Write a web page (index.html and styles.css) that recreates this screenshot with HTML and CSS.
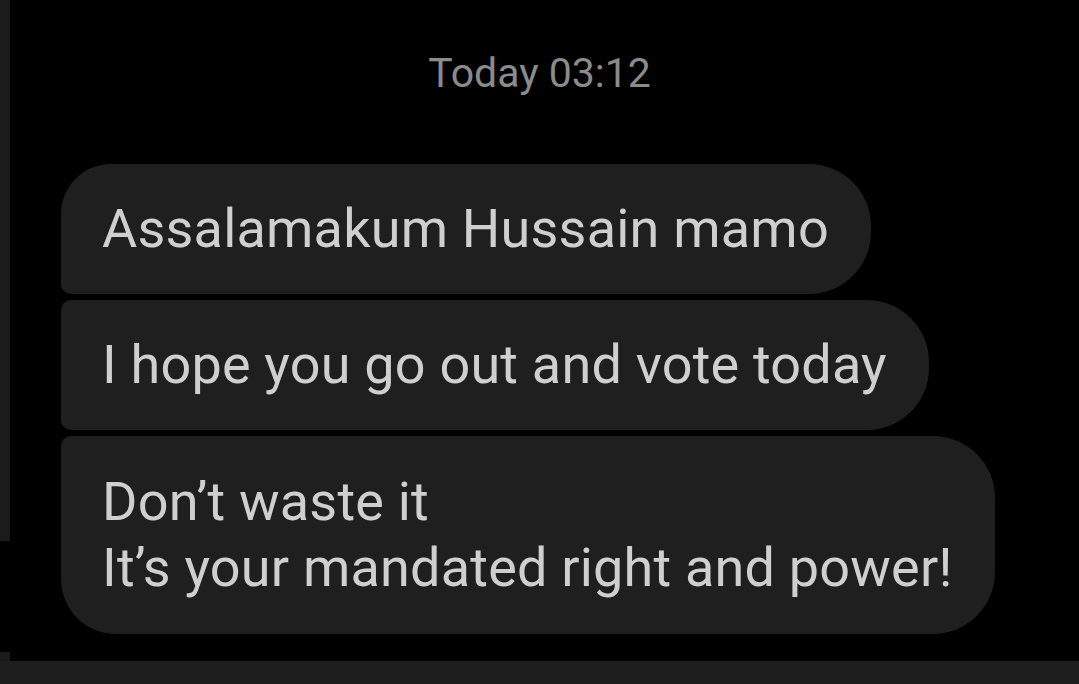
FILE: index.html
```html
<!DOCTYPE html>
<html lang="en">
<head>
<meta charset="utf-8">
<title>Messages</title>
<link rel="stylesheet" href="styles.css">
</head>
<body>
<div class="screen">
  <div class="edge">
    <div class="edge-top"></div>
    <div class="edge-gap"></div>
    <div class="edge-bottom"></div>
  </div>
  <main class="chat">
    <div class="stamp">Today 03:12</div>
    <div class="thread">
      <div class="bubble first">Assalamakum Hussain mamo</div>
      <div class="bubble middle">I hope you go out and vote today</div>
      <div class="bubble last">Don’t waste it<br>It’s your mandated right and power!</div>
    </div>
  </main>
</div>
<div class="bottom-bar"></div>
</body>
</html>
```

FILE: styles.css
```css
html, body {
  margin: 0;
  padding: 0;
  background: #000;
  height: 100%;
  overflow: hidden;
}

body {
  font-family: Roboto, "Noto Sans", "Liberation Sans", sans-serif;
  display: flex;
  flex-direction: column;
}

.screen {
  display: flex;
  height: 661px;
}

.edge {
  width: 10px;
  display: flex;
  flex-direction: column;
}

.edge-top {
  height: 541px;
  background: #1b1b1b;
}

.edge-gap {
  flex: 1;
  background: #000;
}

.edge-bottom {
  height: 9px;
  background: #1b1b1b;
}

.chat {
  flex: 1;
  display: flex;
  flex-direction: column;
  padding: 49px 0 0 51px;
}

.stamp {
  font-size: 41px;
  line-height: 48px;
  color: #8b8b8b;
  text-align: center;
  margin-left: -61px;
}

.thread {
  margin-top: 67px;
  display: flex;
  flex-direction: column;
  align-items: flex-start;
  gap: 6px;
}

.bubble {
  background: #1f1f1f;
  color: #cfcfcf;
  font-size: 54px;
  letter-spacing: 0.2px;
  line-height: 66px;
  padding: 32px 42px 32px 41px;
  white-space: nowrap;
}

.bubble.first {
  border-radius: 50px 62px 62px 10px;
}

.bubble.middle {
  border-radius: 10px 62px 62px 10px;
}

.bubble.last {
  padding-top: 33px;
  padding-bottom: 33px;
  border-radius: 10px 62px 62px 55px;
}

.bottom-bar {
  flex: 1;
  background: #1e1e1e;
}
```
